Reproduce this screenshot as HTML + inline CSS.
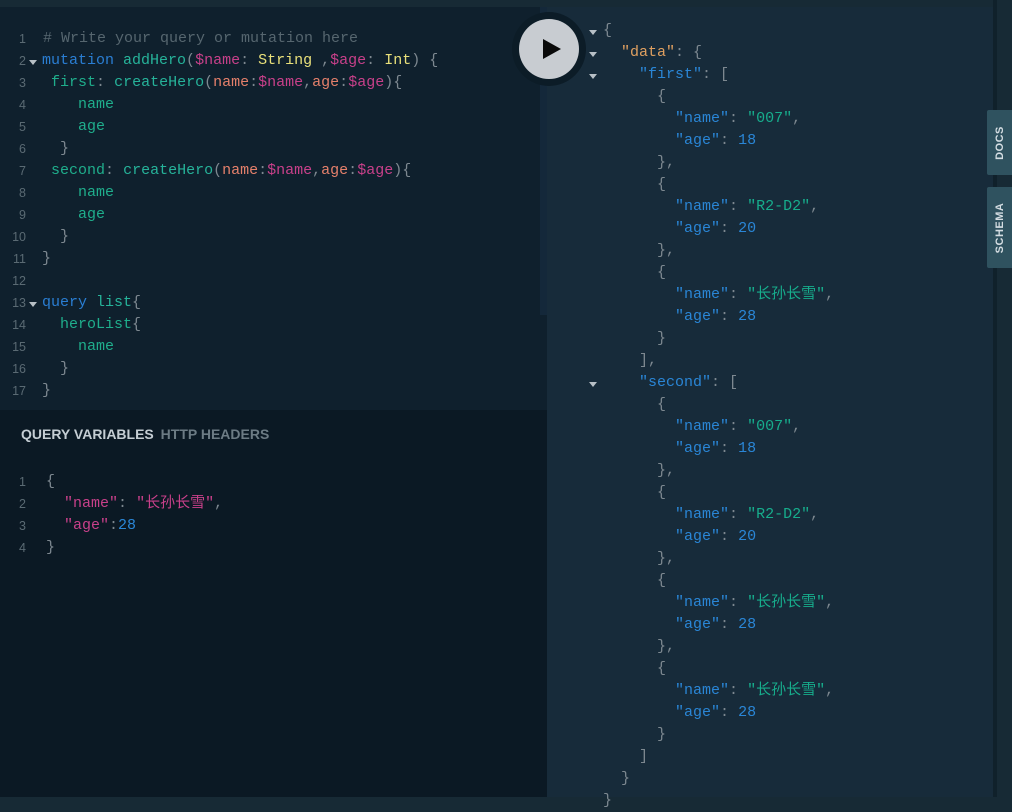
<!DOCTYPE html>
<html><head><meta charset="utf-8"><style>
*{margin:0;padding:0;box-sizing:border-box}
body{width:1012px;height:797px;overflow:hidden;background:#172a35;position:relative;font-family:"Liberation Mono","Noto Sans CJK SC",monospace}
.abs{position:absolute}
.ln{position:absolute;white-space:pre;font-size:15px;line-height:22px;height:22px;margin-top:1px}
.num{position:absolute;width:26px;text-align:right;color:#5a6a73;font-size:12.5px;line-height:22px;margin-top:1px;font-family:"Liberation Sans",sans-serif}
.c{color:#56666f}.k{color:#2a7ed3}.d{color:#26b39a}.v{color:#c8408a}.t{color:#e9e07a}.a{color:#e5806b}.p{color:#7d8890}.f{color:#1fae8c}
.jk{color:#2a86d6}.js{color:#17ad8c}.jn{color:#2a86d6}.jo{color:#e0a060}
.tri{position:absolute;width:0;height:0;border-left:4px solid transparent;border-right:4px solid transparent;border-top:5px solid #b8c0c6;margin-top:1px}
.tab{position:absolute;left:987px;width:25px;background:#2f525f;border-radius:2px 0 0 2px;color:#d4dde2;font-family:"Liberation Sans",sans-serif;font-weight:bold;font-size:11px;letter-spacing:0.5px}
.tab span{position:absolute;left:50%;top:50%;transform:translate(-50%,-50%) rotate(-90deg);white-space:nowrap}
</style></head><body>
<div class="abs" style="left:0;top:7px;width:547px;height:403px;background:#0f202d"></div>
<div class="abs" style="left:540px;top:7px;width:7px;height:308px;background:#14283a"></div>
<div class="abs" style="left:0;top:410px;width:547px;height:387px;background:#0b1924"></div>
<div class="abs" style="left:547px;top:7px;width:448px;height:790px;background:#172b3a"></div>
<div class="abs" style="left:993px;top:0;width:4px;height:797px;background:#10212b"></div>
<div class="abs" style="left:997px;top:0;width:15px;height:797px;background:#172a35"></div>

<!-- left editor -->
<div class="num" style="top:27px">1</div><div class="ln" style="left:43px;top:27px"><span class="c"># Write your query or mutation here</span></div>
<div class="num" style="top:49px">2</div><div class="tri" style="left:29px;top:59px"></div><div class="ln" style="left:42px;top:49px"><span class="k">mutation</span> <span class="d">addHero</span><span class="p">(</span><span class="v">$name</span><span class="p">:</span> <span class="t">String</span> <span class="p">,</span><span class="v">$age</span><span class="p">:</span> <span class="t">Int</span><span class="p">) {</span></div>
<div class="num" style="top:71px">3</div><div class="ln" style="left:42px;top:71px"> <span class="f">first</span><span class="p">:</span> <span class="d">createHero</span><span class="p">(</span><span class="a">name</span><span class="p">:</span><span class="v">$name</span><span class="p">,</span><span class="a">age</span><span class="p">:</span><span class="v">$age</span><span class="p">){</span></div>
<div class="num" style="top:93px">4</div><div class="ln f" style="left:42px;top:93px">    name</div>
<div class="num" style="top:115px">5</div><div class="ln f" style="left:42px;top:115px">    age</div>
<div class="num" style="top:137px">6</div><div class="ln p" style="left:42px;top:137px">  }</div>
<div class="num" style="top:159px">7</div><div class="ln" style="left:42px;top:159px"> <span class="f">second</span><span class="p">:</span> <span class="d">createHero</span><span class="p">(</span><span class="a">name</span><span class="p">:</span><span class="v">$name</span><span class="p">,</span><span class="a">age</span><span class="p">:</span><span class="v">$age</span><span class="p">){</span></div>
<div class="num" style="top:181px">8</div><div class="ln f" style="left:42px;top:181px">    name</div>
<div class="num" style="top:203px">9</div><div class="ln f" style="left:42px;top:203px">    age</div>
<div class="num" style="top:225px">10</div><div class="ln p" style="left:42px;top:225px">  }</div>
<div class="num" style="top:247px">11</div><div class="ln p" style="left:42px;top:247px">}</div>
<div class="num" style="top:269px">12</div>
<div class="num" style="top:291px">13</div><div class="tri" style="left:29px;top:301px"></div><div class="ln" style="left:42px;top:291px"><span class="k">query</span> <span class="d">list</span><span class="p">{</span></div>
<div class="num" style="top:313px">14</div><div class="ln" style="left:42px;top:313px">  <span class="f">heroList</span><span class="p">{</span></div>
<div class="num" style="top:335px">15</div><div class="ln f" style="left:42px;top:335px">    name</div>
<div class="num" style="top:357px">16</div><div class="ln p" style="left:42px;top:357px">  }</div>
<div class="num" style="top:379px">17</div><div class="ln p" style="left:42px;top:379px">}</div>

<!-- variables -->
<div class="abs" style="left:21px;top:426px;font-family:'Liberation Sans',sans-serif;font-size:14px;font-weight:600;color:#c5ced4">QUERY VARIABLES <span style="color:#6c7b84;margin-left:3px">HTTP HEADERS</span></div>
<div class="num" style="top:470px">1</div><div class="ln p" style="left:46px;top:470px">{</div>
<div class="num" style="top:492px">2</div><div class="ln" style="left:46px;top:492px">  <span class="v">"name"</span><span class="p">:</span> <span class="v">"长孙长雪"</span><span class="p">,</span></div>
<div class="num" style="top:514px">3</div><div class="ln" style="left:46px;top:514px">  <span class="v">"age"</span><span class="p">:</span><span class="jn">28</span></div>
<div class="num" style="top:536px">4</div><div class="ln p" style="left:46px;top:536px">}</div>

<!-- play button -->
<div class="abs" style="left:512px;top:12px;width:74px;height:74px;border-radius:50%;background:#0c1c27"></div>
<div class="abs" style="left:519px;top:19px;width:60px;height:60px;border-radius:50%;background:#c8ccd1"></div>
<div class="abs" style="left:543px;top:39px;width:0;height:0;border-top:10px solid transparent;border-bottom:10px solid transparent;border-left:18px solid #0a0a0a"></div>

<!-- result -->
<div class="tri" style="left:589px;top:29px"></div>
<div class="tri" style="left:589px;top:51px"></div>
<div class="tri" style="left:589px;top:73px"></div>
<div class="tri" style="left:589px;top:381px"></div>
<div class="ln p" style="left:603px;top:19px">{</div>
<div class="ln" style="left:603px;top:41px">  <span class="jo">"data"</span><span class="p">: {</span></div>
<div class="ln" style="left:603px;top:63px">    <span class="jk">"first"</span><span class="p">: [</span></div>
<div class="ln p" style="left:603px;top:85px">      {</div>
<div class="ln" style="left:603px;top:107px">        <span class="jk">"name"</span><span class="p">:</span> <span class="js">"007"</span><span class="p">,</span></div>
<div class="ln" style="left:603px;top:129px">        <span class="jk">"age"</span><span class="p">:</span> <span class="jn">18</span></div>
<div class="ln p" style="left:603px;top:151px">      },</div>
<div class="ln p" style="left:603px;top:173px">      {</div>
<div class="ln" style="left:603px;top:195px">        <span class="jk">"name"</span><span class="p">:</span> <span class="js">"R2-D2"</span><span class="p">,</span></div>
<div class="ln" style="left:603px;top:217px">        <span class="jk">"age"</span><span class="p">:</span> <span class="jn">20</span></div>
<div class="ln p" style="left:603px;top:239px">      },</div>
<div class="ln p" style="left:603px;top:261px">      {</div>
<div class="ln" style="left:603px;top:283px">        <span class="jk">"name"</span><span class="p">:</span> <span class="js">"长孙长雪"</span><span class="p">,</span></div>
<div class="ln" style="left:603px;top:305px">        <span class="jk">"age"</span><span class="p">:</span> <span class="jn">28</span></div>
<div class="ln p" style="left:603px;top:327px">      }</div>
<div class="ln p" style="left:603px;top:349px">    ],</div>
<div class="ln" style="left:603px;top:371px">    <span class="jk">"second"</span><span class="p">: [</span></div>
<div class="ln p" style="left:603px;top:393px">      {</div>
<div class="ln" style="left:603px;top:415px">        <span class="jk">"name"</span><span class="p">:</span> <span class="js">"007"</span><span class="p">,</span></div>
<div class="ln" style="left:603px;top:437px">        <span class="jk">"age"</span><span class="p">:</span> <span class="jn">18</span></div>
<div class="ln p" style="left:603px;top:459px">      },</div>
<div class="ln p" style="left:603px;top:481px">      {</div>
<div class="ln" style="left:603px;top:503px">        <span class="jk">"name"</span><span class="p">:</span> <span class="js">"R2-D2"</span><span class="p">,</span></div>
<div class="ln" style="left:603px;top:525px">        <span class="jk">"age"</span><span class="p">:</span> <span class="jn">20</span></div>
<div class="ln p" style="left:603px;top:547px">      },</div>
<div class="ln p" style="left:603px;top:569px">      {</div>
<div class="ln" style="left:603px;top:591px">        <span class="jk">"name"</span><span class="p">:</span> <span class="js">"长孙长雪"</span><span class="p">,</span></div>
<div class="ln" style="left:603px;top:613px">        <span class="jk">"age"</span><span class="p">:</span> <span class="jn">28</span></div>
<div class="ln p" style="left:603px;top:635px">      },</div>
<div class="ln p" style="left:603px;top:657px">      {</div>
<div class="ln" style="left:603px;top:679px">        <span class="jk">"name"</span><span class="p">:</span> <span class="js">"长孙长雪"</span><span class="p">,</span></div>
<div class="ln" style="left:603px;top:701px">        <span class="jk">"age"</span><span class="p">:</span> <span class="jn">28</span></div>
<div class="ln p" style="left:603px;top:723px">      }</div>
<div class="ln p" style="left:603px;top:745px">    ]</div>
<div class="ln p" style="left:603px;top:767px">  }</div>
<div class="ln p" style="left:603px;top:789px">}</div>

<div class="tab" style="top:110px;height:65px"><span>DOCS</span></div>
<div class="tab" style="top:187px;height:81px"><span>SCHEMA</span></div>
</body></html>
